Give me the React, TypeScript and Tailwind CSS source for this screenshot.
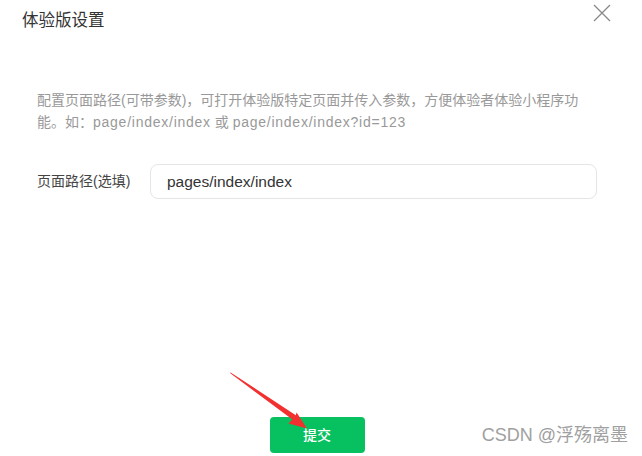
import React from 'react';

const font = "font-['Liberation_Sans','Noto_Sans_CJK_SC',sans-serif]";

function CloseIcon() {
  return (
    <svg width="20" height="20" viewBox="0 0 20 20" className="block">
      <path d="M2 2 L18 18 M18 2 L2 18" stroke="#8a8a8a" strokeWidth="1.3" fill="none" />
    </svg>
  );
}

// red annotation arrow drawn over the dialog
function Arrow() {
  return (
    <svg className="absolute inset-0 pointer-events-none" width="642" height="456" viewBox="0 0 642 456">
      <polygon
        points="230,373 230.6,372.4 295.8,415.2 296.6,412.4 307,428.5 288.4,423.4 292.4,419.6"
        fill="#f2302f"
      />
    </svg>
  );
}

export default function App() {
  return (
    <div className={`relative w-[642px] h-[456px] bg-white overflow-hidden ${font}`}>
      {/* Header */}
      <div className="flex items-start justify-between pl-[22px] pr-[30px] pt-[9px]">
        <h1 className="text-[16.5px] leading-[22px] text-[#333]">体验版设置</h1>
        <div className="mt-[-6px]">
          <CloseIcon />
        </div>
      </div>

      {/* Description */}
      <p className="mt-[58px] ml-[37px] text-[14px] leading-[22px] text-[#999]">
        配置页面路径(可带参数)，可打开体验版特定页面并传入参数，方便体验者体验小程序功
        <br />
        能。如：<span className="tracking-[0.75px]">page/index/index</span> 或{' '}
        <span className="tracking-[0.75px]">page/index/index?id=123</span>
      </p>

      {/* Path field */}
      <div className="flex items-center mt-[31px] ml-[37px]">
        <label className="w-[113px] text-[14px] text-[#444]">页面路径(选填)</label>
        <div className="flex items-center w-[447px] h-[35px] pl-[16px] border border-[#e5e5e5] rounded-[8px] text-[15.5px] text-[#333]">
          pages/index/index
        </div>
      </div>

      {/* Submit */}
      <div className="flex justify-center mt-[218px]">
        <button className="w-[95px] h-[36px] ml-[-8px] rounded-[4px] bg-[#07c160] text-white text-[14px] font-medium">
          提交
        </button>
      </div>

      <Arrow />

      {/* watermark */}
      <div className="absolute right-[14px] bottom-[7px] text-[18px] text-[#a0a0a0]">CSDN @浮殇离墨</div>
    </div>
  );
}
